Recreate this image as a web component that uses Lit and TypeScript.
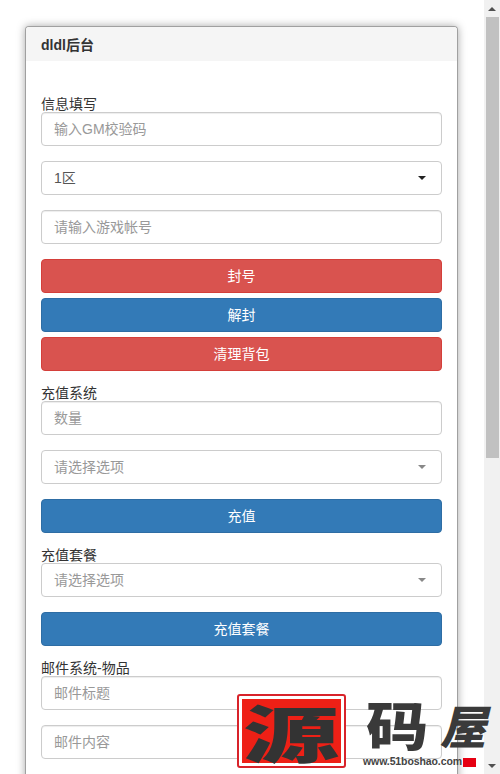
import { LitElement, html, css } from "lit";
import { customElement } from "lit/decorators.js";

@customElement("app-root")
export class AppRoot extends LitElement {
  static styles = css`
    :host {
      display: block;
      position: relative;
      width: 500px;
      height: 774px;
      overflow: hidden;
      background: #fff;
      color: #333;
      font: 14px/20px "Liberation Sans", "Noto Sans CJK SC", sans-serif;
    }
    * { box-sizing: border-box; }
    .page { display: flex; height: 774px; }
    .main { flex: 1; min-width: 0; padding: 26px 26px 0 25px; }
    .card {
      border: 1px solid #a0a0a0;
      border-bottom: 0;
      border-radius: 4px 4px 0 0;
      box-shadow: 0 0 9px rgba(0, 0, 0, 0.35);
      background: #fff;
      height: 800px;
    }
    .head {
      height: 34px;
      padding: 8px 15px 6px;
      background: #f5f5f5;
      font-weight: bold;
      color: #333;
      border-radius: 3px 3px 0 0;
    }
    .body { padding: 35px 15px 0; display: flex; flex-direction: column; }
    .label { display: block; line-height: 16px; height: 16px; color: #333; }
    .field {
      display: block;
      width: 100%;
      height: 34px;
      padding: 6px 12px;
      border: 1px solid #ccc;
      border-radius: 4px;
      background: #fff;
      box-shadow: inset 0 1px 1px rgba(0, 0, 0, 0.075);
      font: inherit;
      color: #555;
      margin-bottom: 15px;
      outline: none;
    }
    .field::placeholder { color: #999; opacity: 1; }
    .select { display: flex; align-items: center; justify-content: space-between; box-shadow: none; }
    .select.empty { color: #999; }
    .arrow {
      width: 0;
      height: 0;
      margin-right: 3px;
      border-style: solid;
      border-width: 4px 4px 0;
      border-color: #222 transparent transparent;
    }
    .empty .arrow { border-top-color: #888; }
    .btn {
      display: block;
      width: 100%;
      height: 34px;
      border: 1px solid;
      border-radius: 4px;
      color: #fff;
      font: inherit;
      text-align: center;
      padding: 6px 12px;
    }
    .red { background: #d9534f; border-color: #d43f3a; }
    .blue { background: #337ab7; border-color: #2e6da4; }
    .gap5 { margin-bottom: 5px; }
    .gap14 { margin-bottom: 14px; }
    .scrollbar {
      flex: none;
      width: 16px;
      height: 774px;
      background: #f1f1f1;
      display: flex;
      flex-direction: column;
      align-items: center;
      padding-top: 7px;
    }
    .up, .down { width: 0; height: 0; border-style: solid; border-color: transparent; }
    .up { border-width: 0 4px 4px; border-bottom-color: #505050; margin-bottom: 6px; }
    .thumb { width: 13px; height: 441px; background: #c1c1c1; }
    .down { border-width: 4px 4px 0; border-top-color: #505050; margin-top: auto; margin-bottom: 6px; }

    .mark { position: absolute; left: 0; top: 0; width: 500px; height: 774px; pointer-events: none; }
    .stamp {
      position: absolute;
      left: 237px;
      top: 694px;
      width: 109px;
      height: 74px;
      border: 2px solid #d8232a;
      border-radius: 3px;
      background: #fff;
      padding: 3px;
    }
    .stamp-in {
      display: flex;
      align-items: center;
      justify-content: center;
      width: 100%;
      height: 100%;
      background: #ee2016;
    }
    .stamp-ch {
      font: 900 62px/62px "Noto Sans CJK SC", sans-serif;
      color: #333;
      transform: scaleX(1.55);
    }
    .big {
      position: absolute;
      font: 900 52px/60px "Noto Sans CJK SC", sans-serif;
      color: #3a3a3a;
    }
    .ma { left: 366px; top: 694px; transform: scaleX(1.2); transform-origin: left center; }
    .wu { left: 445px; top: 694px; font-size: 46px; transform: skewX(-14deg); }
    .url {
      position: absolute;
      left: 363px;
      top: 754px;
      font: bold 10.5px/14px "Liberation Sans", sans-serif;
      letter-spacing: -0.1px;
      color: #444;
    }
    .flag { position: absolute; left: 463px; top: 758px; width: 13px; height: 9px; background: #e60012; }
  `;

  render() {
    return html`
      <div class="page">
        <div class="main">
          <div class="card">
            <div class="head">dldl后台</div>
            <div class="body">
              <label class="label">信息填写</label>
              <input class="field" placeholder="输入GM校验码" />
              <div class="field select"><span>1区</span><i class="arrow"></i></div>
              <input class="field" placeholder="请输入游戏帐号" />
              <button class="btn red gap5">封号</button>
              <button class="btn blue gap5">解封</button>
              <button class="btn red gap14">清理背包</button>

              <label class="label">充值系统</label>
              <input class="field" placeholder="数量" />
              <div class="field select empty"><span>请选择选项</span><i class="arrow"></i></div>
              <button class="btn blue gap14">充值</button>

              <label class="label">充值套餐</label>
              <div class="field select empty"><span>请选择选项</span><i class="arrow"></i></div>
              <button class="btn blue gap14">充值套餐</button>

              <label class="label">邮件系统-物品</label>
              <input class="field" placeholder="邮件标题" />
              <input class="field" placeholder="邮件内容" />
            </div>
          </div>
        </div>
        <div class="scrollbar">
          <i class="up"></i>
          <div class="thumb"></div>
          <i class="down"></i>
        </div>
      </div>
      <div class="mark">
        <div class="stamp"><div class="stamp-in"><span class="stamp-ch">源</span></div></div>
        <span class="big ma">码</span>
        <span class="big wu">屋</span>
        <span class="url">www.51boshao.com</span>
        <i class="flag"></i>
      </div>
    `;
  }
}
